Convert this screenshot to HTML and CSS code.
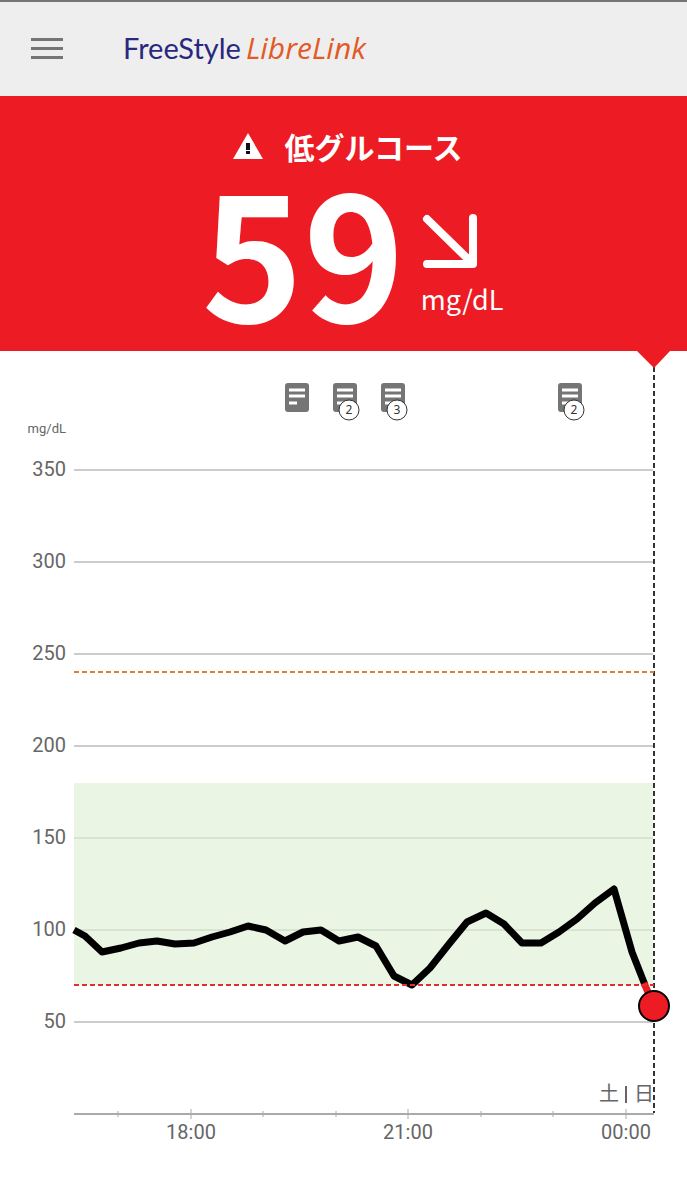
FILE: index.html
```
<!DOCTYPE html>
<html lang="ja">
<head>
    <meta charset="UTF-8">
    <meta name="viewport" content="width=device-width, initial-scale=1.0">
    <title>FreeStyle LibreLink</title>
    <link rel="stylesheet" href="styles.css">
</head>
<body>
    <header>
        <button class="menu" type="button" aria-label="メニュー">
            <span></span>
            <span></span>
            <span></span>
        </button>
        <h1 class="logo"><span class="freestyle">FreeStyle</span><span class="librelink">LibreLink</span></h1>
    </header>
    <main>
        <section class="reading">
            <h2 class="alert">
                <svg width="30" height="26" viewBox="0 0 30 26" aria-hidden="true">
                    <path d="M15 0L30 26H0Z" fill="#fff"/>
                    <path d="M13 10h4v7h-4zM13 18h4v3h-4z" fill="#111"/>
                </svg>
                低グルコース
            </h2>
            <div class="glucose">
                <span class="value">59</span>
                <div class="trend">
                    <svg width="58" height="58" viewBox="0 0 58 58" aria-hidden="true">
                        <path d="M6 8L51 52M52 7V53H6" fill="none" stroke="#fff" stroke-width="8" stroke-linecap="round" stroke-linejoin="round"/>
                    </svg>
                    <span class="unit">mg/dL</span>
                </div>
            </div>
        </section>
        <svg class="chart" viewBox="0 0 687 849" role="img" aria-label="グルコースグラフ">
            <defs>
                <g id="note">
                    <rect width="24" height="29" rx="3" fill="#757575"/>
                    <path d="M4 7h16M4 13h16M4 20h8" stroke="#fff" stroke-width="3"/>
                </g>
            </defs>

            <!-- target range -->
            <rect class="range" x="74" y="432" width="579" height="202"/>

            <path class="grid" d="M74 119H653M74 211H653M74 303H653M74 395H653M74 671H653"/>
            <path class="grid inner" d="M74 487H653M74 579H653"/>
            <path class="axis" d="M74 763H654"/>
            <path class="tick" d="M118 760v6M191 758v10M263 760v6M336 760v6M408 758v10M481 760v6M553 760v6M626 758v10"/>

            <!-- now -->
            <path class="now" d="M654 16V762"/>
            <path d="M637 0H670L654 17Z" fill="#ed1c24"/>

            <!-- glucose -->
            <polyline class="line" points="74,579 85,585 102,601 121,597 139,592 157,590 175,593 194,592 212,586 230,581 248,575 266,579 285,590 303,581 321,579 339,590 358,586 376,595 394,625 412,634 430,617 449,593 467,571 486,562 504,573 522,592 541,592 559,581 577,568 595,552 614,538 632,601 645,634"/>
            <path class="line low" d="M644 632L654 655"/>
            <path class="limit high-limit" d="M74 321H654"/>
            <path class="limit low-limit" d="M74 634H654"/>
            <circle cx="654" cy="655" r="15" fill="#ed1c24" stroke="#000" stroke-width="2"/>

            <!-- notes -->
            <use href="#note" x="285" y="32"/>
            <use href="#note" x="333" y="32"/>
            <use href="#note" x="381" y="32"/>
            <use href="#note" x="558" y="32"/>
            <g class="badge">
                <circle cx="349" cy="59" r="10"/>
                <text x="349" y="63">2</text>
                <circle cx="397" cy="59" r="10"/>
                <text x="397" y="63">3</text>
                <circle cx="574" cy="59" r="10"/>
                <text x="574" y="63">2</text>
            </g>

            <g class="y-labels">
                <text class="small" x="66" y="82">mg/dL</text>
                <text x="66" y="125">350</text>
                <text x="66" y="217">300</text>
                <text x="66" y="309">250</text>
                <text x="66" y="401">200</text>
                <text x="66" y="493">150</text>
                <text x="66" y="585">100</text>
                <text x="66" y="677">50</text>
            </g>
            <g class="x-labels">
                <text x="191" y="788">18:00</text>
                <text x="408" y="788">21:00</text>
                <text x="626" y="788">00:00</text>
                <text x="609" y="750">土</text>
                <text x="644" y="750">日</text>
            </g>
            <path d="M626 735V752" stroke="#666" stroke-width="2"/>
        </svg>
    </main>
</body>
</html>
```

FILE: styles.css
```
* {
    box-sizing: border-box;
}
body {
    margin: 0;
    background-color: #fff;
    color: #666;
    font-family: Roboto, "Noto Sans CJK JP", sans-serif;
}
header {
    display: flex;
    align-items: center;
    gap: 60px;
    height: 96px;
    padding: 0 31px 2px;
    border-top: 2px solid #757575;
    background-color: #eee;
}
.menu {
    display: flex;
    flex-direction: column;
    gap: 6px;
    padding: 0;
    border: 0;
    background: none;
    cursor: pointer;
}
.menu span {
    width: 32px;
    height: 3px;
    background-color: #757575;
}
.logo {
    display: flex;
    align-items: baseline;
    gap: 5px;
    margin: 0;
    font-family: Lato, sans-serif;
    font-size: 29px;
    font-weight: 400;
    line-height: 36px;
}
.freestyle {
    color: #28287f;
}
.librelink {
    color: #e25a26;
    font-family: "Open Sans", sans-serif;
    font-size: 30px;
    font-style: italic;
}
.reading {
    display: flex;
    flex-direction: column;
    align-items: center;
    height: 255px;
    padding-top: 30px;
    background-color: #ed1c24;
    color: #fff;
    font-family: "Noto Sans CJK JP", sans-serif;
}
.alert {
    display: flex;
    align-items: center;
    gap: 22px;
    margin: 0;
    padding-left: 8px;
    font-size: 30px;
    font-weight: 700;
    line-height: 40px;
}
.glucose {
    display: flex;
    align-items: center;
    gap: 16px;
    padding-left: 18px;
}
.value {
    font-size: 172px;
    font-weight: 700;
    line-height: 164px;
}
.trend {
    display: flex;
    flex-direction: column;
    gap: 12px;
    padding-top: 32px;
}
.unit {
    font-size: 27px;
    line-height: 36px;
}
.chart {
    display: block;
    width: 100%;
}
.range {
    fill: #ebf5e3;
}
.grid {
    stroke: #ccc;
    stroke-width: 2;
}
.inner {
    stroke: #c6d0c0;
    stroke-width: 1;
}
.axis {
    stroke: #aaa;
    stroke-width: 2;
}
.tick {
    stroke: #aaa;
    stroke-width: 1;
}
.now {
    stroke: #333;
    stroke-width: 2;
    stroke-dasharray: 5 3;
}
.line {
    fill: none;
    stroke: #000;
    stroke-width: 7;
    stroke-linejoin: round;
}
.low {
    stroke: #ed1c24;
}
.limit {
    stroke-width: 2;
    stroke-dasharray: 5 3;
}
.high-limit {
    stroke: #e08030;
}
.low-limit {
    stroke: #e03030;
}
.badge circle {
    fill: #fff;
    stroke: #333;
    stroke-width: 1;
}
.badge text {
    fill: #333;
    font-family: "Noto Sans", sans-serif;
    font-size: 12px;
    text-anchor: middle;
}
.y-labels, .x-labels {
    fill: #666;
    font-size: 20px;
}
.y-labels {
    text-anchor: end;
}
.x-labels {
    text-anchor: middle;
}
.small {
    font-size: 13px;
}
```
